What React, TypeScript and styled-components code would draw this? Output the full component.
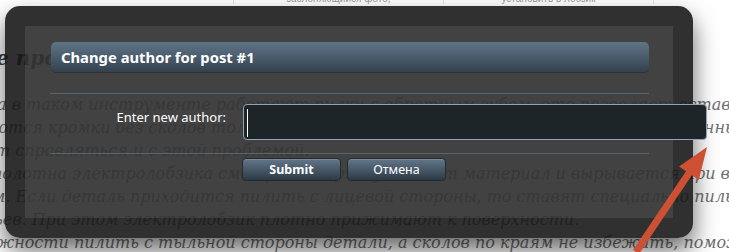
import React from 'react';
import styled, { createGlobalStyle } from 'styled-components';

const GlobalStyle = createGlobalStyle`
  html, body {
    margin: 0;
    padding: 0;
    background: #ffffff;
    overflow: hidden;
  }
`;

// --- Page underneath ---

const Page = styled.div`
  position: relative;
  width: 729px;
  height: 252px;
  overflow: hidden;
  background: #fff;
`;

const TopTable = styled.div`
  display: grid;
  grid-template-columns: 233px 210px 210px 76px;
  height: 10px;
  margin-top: -6px;
  padding-bottom: 2px;
`;

const TopCell = styled.div<{ $bordered?: boolean }>`
  border-left: ${({ $bordered }) => ($bordered ? '1px solid #e3e3e3' : 'none')};
  font-family: 'Liberation Sans', Arial, sans-serif;
  font-size: 10px;
  line-height: 10px;
  color: #9a9a9a;
  text-align: center;
  white-space: nowrap;
  overflow: hidden;
`;

const Article = styled.div`
  display: flex;
  flex-direction: column;
  padding-top: 38px;
  font-family: 'DejaVu Serif', Georgia, serif;
  font-style: italic;
  white-space: nowrap;
`;

const Heading = styled.div`
  font-size: 20px;
  font-weight: bold;
  line-height: 28px;
  color: #3a3a3a;
  margin-left: -4px;
  margin-bottom: 21px;
`;

const Line = styled.div<{ $shift: number }>`
  font-size: 16px;
  line-height: 23px;
  color: #707070;
  margin-left: ${({ $shift }) => $shift}px;
`;

// --- Overlay ---

const Overlay = styled.div`
  position: absolute;
  left: 5px;
  top: 6px;
  width: 599px;
  height: 176px;
  border: 20px solid rgba(22, 22, 22, 0.89);
  border-radius: 15px;
  background: rgba(50, 50, 50, 0.92);
  background-clip: padding-box;
  box-shadow: 0 12px 24px rgba(0, 0, 0, 0.6);
  padding: 16px 24px 0 25px;
  display: flex;
  flex-direction: column;
  font-family: 'Noto Sans', 'Open Sans', sans-serif;
`;

const TitleBar = styled.h2`
  margin: 0 0 0 1px;
  height: 30px;
  flex-shrink: 0;
  border-radius: 5px;
  background: linear-gradient(to bottom, #5f7486 0%, #4a5c6c 50%, #33414d 100%);
  box-shadow: 0 1px 0 rgba(0, 0, 0, 0.25);
  display: flex;
  align-items: center;
  padding-left: 10px;
  font-size: 14.8px;
  font-weight: 700;
  color: #ffffff;
`;

const Divider = styled.div`
  height: 1px;
  flex-shrink: 0;
  background: #56656f;
  width: 599px;
`;

const TopDivider = styled(Divider)`
  margin-top: 21px;
`;

const FormRow = styled.div`
  display: flex;
  margin: 10px 0 13px;
  height: 36px;
  flex-shrink: 0;
`;

const Label = styled.div`
  width: 193px;
  flex-shrink: 0;
  padding-top: 4px;
  padding-right: 17px;
  box-sizing: border-box;
  text-align: right;
  font-size: 13px;
  color: #ffffff;
`;

const Field = styled.div`
  width: 464px;
  height: 36px;
  box-sizing: border-box;
  flex-shrink: 0;
  background: #1e2528;
  border: 1px solid #8ea6b6;
  border-radius: 4px;
  padding: 4px 0 0 3px;
`;

const Caret = styled.div`
  width: 1px;
  height: 28px;
  background: #ffffff;
`;

const ButtonRow = styled.div`
  display: flex;
  gap: 6px;
  margin-top: 4px;
  padding-left: 192px;
`;

const Button = styled.button<{ $bold?: boolean }>`
  width: 99px;
  height: 23px;
  border: 1px solid #1f2a33;
  border-radius: 4px;
  background: linear-gradient(to bottom, #62778a 0%, #475867 50%, #2d3a45 100%);
  box-shadow: inset 0 1px 0 rgba(255, 255, 255, 0.15);
  color: #ffffff;
  font-family: 'Noto Sans', 'Open Sans', sans-serif;
  font-size: 12.5px;
  font-weight: ${({ $bold }) => ($bold ? 700 : 400)};
  padding: 0;
  cursor: pointer;
`;

const ArrowSvg = styled.svg`
  position: absolute;
  left: 0;
  top: 0;
  pointer-events: none;
`;

const lines = [
  { shift: -3, text: 'а в таком инструменте работают пилки с обратным зубом, это позволяет остави' },
  { shift: -6, text: 'ются кромки без сколов только с одной стороны детали. Пилки для ламинированных и бел' },
  { shift: -5, text: 'т справляться и с этой проблемой.' },
  { shift: -8, text: 'полотна электролобзика смотрят вверх, зуб тянет материал и вырывается при выпиле с краю' },
  { shift: -8, text: 'м. Если деталь приходится пилить с лицевой стороны, то ставят специально пильное' },
  { shift: -6, text: 'ьев. При этом электролобзик плотно прижимают к поверхности.' },
  { shift: -4, text: 'жности пилить с тыльной стороны детали, а сколов по краям не избежать, поможет скотч' },
];

const App = () => (
  <Page>
    <GlobalStyle />
    <TopTable>
      <TopCell />
      <TopCell $bordered>заслоняющийся фото,</TopCell>
      <TopCell $bordered>установить в лобзик</TopCell>
      <TopCell $bordered />
    </TopTable>
    <Article>
      <Heading>е пропила без сколов</Heading>
      {lines.map((l, i) => (
        <Line key={i} $shift={l.shift}>{l.text}</Line>
      ))}
    </Article>

    <Overlay>
      <TitleBar>Change author for post #1</TitleBar>
      <TopDivider />
      <FormRow>
        <Label>Enter new author:</Label>
        <Field>
          <Caret />
        </Field>
      </FormRow>
      <Divider />
      <ButtonRow>
        <Button $bold>Submit</Button>
        <Button>Отмена</Button>
      </ButtonRow>
    </Overlay>

    <ArrowSvg width="729" height="252" viewBox="0 0 729 252">
      <polygon
        points="707,147 698.8,180.1 691.8,175.3 639,254 633,250 686,171.3 679,166.5"
        fill="#cd5035"
      />
    </ArrowSvg>
  </Page>
);

export default App;
